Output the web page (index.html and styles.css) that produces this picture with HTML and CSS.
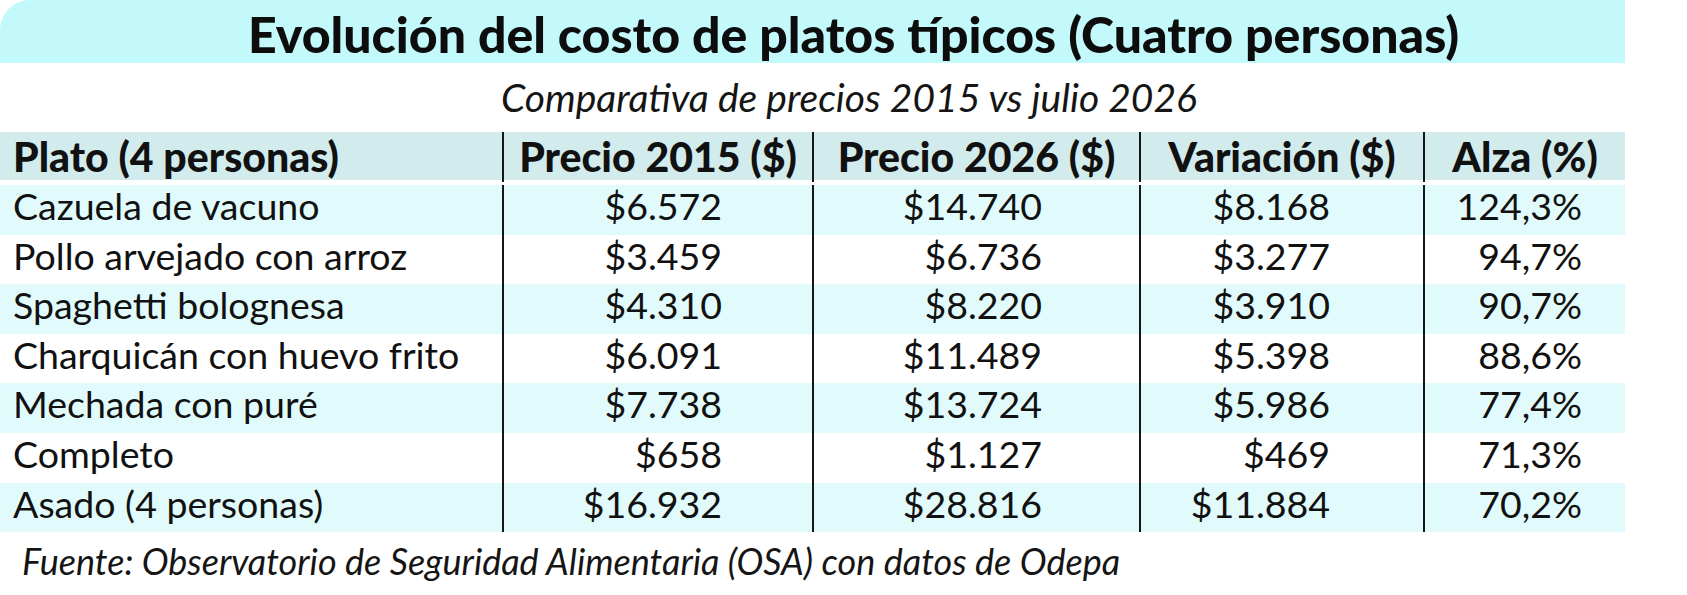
FILE: index.html
```html
<!DOCTYPE html>
<html lang="es">
<head>
<meta charset="utf-8">
<title>Evolución del costo de platos típicos</title>
<link rel="stylesheet" href="styles.css">
</head>
<body>
<div class="page">
  <header class="title-band">
    <h1 class="title">Evolución del costo de platos típicos (Cuatro personas)</h1>
  </header>
  <p class="subtitle">Comparativa de precios 2015 vs julio 2026</p>
  <div class="table">
    <div class="row head">
      <div class="cell name">Plato (4 personas)</div>
      <div class="cell">Precio 2015 ($)</div>
      <div class="cell">Precio 2026 ($)</div>
      <div class="cell">Variación ($)</div>
      <div class="cell">Alza (%)</div>
    </div>
    <div class="row tint">
      <div class="cell name">Cazuela de vacuno</div>
      <div class="cell num c2">$6.572</div>
      <div class="cell num c3">$14.740</div>
      <div class="cell num c4">$8.168</div>
      <div class="cell num c5">124,3%</div>
    </div>
    <div class="row">
      <div class="cell name">Pollo arvejado con arroz</div>
      <div class="cell num c2">$3.459</div>
      <div class="cell num c3">$6.736</div>
      <div class="cell num c4">$3.277</div>
      <div class="cell num c5">94,7%</div>
    </div>
    <div class="row tint">
      <div class="cell name">Spaghetti bolognesa</div>
      <div class="cell num c2">$4.310</div>
      <div class="cell num c3">$8.220</div>
      <div class="cell num c4">$3.910</div>
      <div class="cell num c5">90,7%</div>
    </div>
    <div class="row">
      <div class="cell name">Charquicán con huevo frito</div>
      <div class="cell num c2">$6.091</div>
      <div class="cell num c3">$11.489</div>
      <div class="cell num c4">$5.398</div>
      <div class="cell num c5">88,6%</div>
    </div>
    <div class="row tint">
      <div class="cell name">Mechada con puré</div>
      <div class="cell num c2">$7.738</div>
      <div class="cell num c3">$13.724</div>
      <div class="cell num c4">$5.986</div>
      <div class="cell num c5">77,4%</div>
    </div>
    <div class="row">
      <div class="cell name">Completo</div>
      <div class="cell num c2">$658</div>
      <div class="cell num c3">$1.127</div>
      <div class="cell num c4">$469</div>
      <div class="cell num c5">71,3%</div>
    </div>
    <div class="row tint">
      <div class="cell name">Asado (4 personas)</div>
      <div class="cell num c2">$16.932</div>
      <div class="cell num c3">$28.816</div>
      <div class="cell num c4">$11.884</div>
      <div class="cell num c5">70,2%</div>
    </div>
  </div>
  <p class="source">Fuente: Observatorio de Seguridad Alimentaria (OSA) con datos de Odepa</p>
</div>
</body>
</html>
```

FILE: styles.css
```css
* {
  box-sizing: border-box;
}

html, body {
  margin: 0;
  padding: 0;
  background: #ffffff;
}

body {
  font-family: Lato, "Open Sans", "Liberation Sans", sans-serif;
  color: #111111;
}

.page {
  width: 1687px;
  height: 595px;
  overflow: hidden;
}

.title-band {
  width: 1625px;
  height: 63px;
  background: #c3f9fb;
  border-top-left-radius: 30px;
  padding: 5px 0 0 82px;
  text-align: center;
}

.title {
  margin: 0;
  font-size: 50px;
  line-height: 58px;
  font-weight: 900;
  color: #0d0d0d;
  white-space: nowrap;
}

.subtitle {
  margin: 0;
  height: 69px;
  padding-left: 11px;
  text-align: center;
  font-size: 39px;
  line-height: 69px;
  font-style: italic;
  color: #151515;
}

.table {
  width: 1625px;
}

.row {
  display: grid;
  grid-template-columns: 502px 310px 327px 284px 202px;
  height: 49.6px;
}

.row.tint {
  background: #e1fbfc;
}

.row.head {
  height: 53px;
  background: #d2ecee;
  border-bottom: 5px solid #ffffff;
}

.cell {
  font-size: 37.5px;
  line-height: 41.6px;
  white-space: nowrap;
}

.cell + .cell {
  border-left: 2px solid #161616;
}

.head .cell {
  font-weight: 900;
  font-size: 41px;
  line-height: 50px;
  text-align: center;
}

.cell.name {
  padding-left: 13px;
  text-align: left;
}

.head .cell.name {
  text-align: left;
}

.num {
  text-align: right;
}

.c2 { padding-right: 90px; }
.c3 { padding-right: 97px; }
.c4 { padding-right: 93px; }
.c5 { padding-right: 43px; }

.source {
  margin: 0;
  padding: 4px 0 0 22px;
  font-size: 36px;
  line-height: 50px;
  font-style: italic;
  color: #151515;
}
```
